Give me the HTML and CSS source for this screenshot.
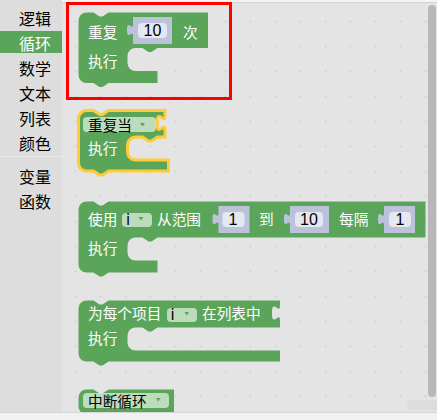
FILE: index.html
```html
<!DOCTYPE html>
<html lang="zh">
<head>
<meta charset="utf-8">
<title>Blockly 循环</title>
<link rel="stylesheet" href="styles.css">
</head>
<body>
<div class="app">
  <div class="main">
    <nav class="toolbox">
      <div class="cat">逻辑</div>
      <div class="cat sel">循环</div>
      <div class="cat">数学</div>
      <div class="cat">文本</div>
      <div class="cat">列表</div>
      <div class="cat">颜色</div>
      <div class="sep"></div>
      <div class="cat">变量</div>
      <div class="cat">函数</div>
    </nav>
    <div class="flyout">
      <div class="flyout-top"></div>
      <div class="canvas">
        <svg class="grid" width="100%" height="100%">
          <defs>
            <pattern id="gridpat" patternUnits="userSpaceOnUse" x="0" y="0" width="25" height="25">
              <rect x="12" y="18" width="3" height="1" class="gdot"/>
              <rect x="13" y="17" width="1" height="3" class="gdot"/>
            </pattern>
          </defs>
          <rect width="100%" height="100%" fill="url(#gridpat)"/>
        </svg>
        <div class="blocks">
          <!-- 重复 10 次 -->
          <svg class="blk" width="145" height="78">
            <g transform="translate(8.5,2.5)">
              <path class="body" d="M0,8 A8,8 0 0 1 8,0 H15 l6,4 3,0 6,-4 H129.5 V35.5 H79 l-6,4 -3,0 -6,-4 H57 a8,8 0 0 0 -8,8 V50.5 a8,8 0 0 0 8,8 H79 V70.5 H30 l-6,4 -3,0 -6,-4 H8 a8,8 0 0 1 -8,-8 Z"/>
              <text class="lbl" x="9.5" y="25">重复</text>
              <g transform="translate(54.5,4.5)">
                <path class="shadow" d="M0,0 V7 c0,8 -6,-6 -6,6 s6,-2 6,6 V27 H39 V0 Z"/>
                <rect class="field" x="5" y="6" width="29" height="15" rx="4"/>
                <text class="num" x="19.5" y="19">10</text>
              </g>
              <text class="lbl" x="104.5" y="25">次</text>
              <text class="lbl" x="9.5" y="54.7">执行</text>
            </g>
          </svg>
          <!-- 重复当 -->
          <svg class="blk" width="102" height="71">
            <g transform="translate(8.5,2.5)">
              <path class="body hl" d="M0,8 A8,8 0 0 1 8,0 H15 l6,4 3,0 6,-4 H86.5 V5 c0,10 -8,-8 -8,7.5 s8,-2.5 8,7.5 V26.5 H79 l-6,4 -3,0 -6,-4 H57 a8,8 0 0 0 -8,8 V41.5 a8,8 0 0 0 8,8 H90 V60.5 H30 l-6,4 -3,0 -6,-4 H8 a8,8 0 0 1 -8,-8 Z"/>
              <rect class="field" x="4.5" y="6.5" width="73" height="15" rx="4"/>
              <text class="fld" x="9.5" y="20">重复当</text>
              <polygon class="arrow" points="61.5,12.5 66.5,12.5 64,16"/>
              <text class="lbl" x="9.5" y="43.3">执行</text>
            </g>
          </svg>
          <!-- 使用 i 从范围 -->
          <svg class="blk" width="360" height="79">
            <g transform="translate(8.5,2.5)">
              <path class="body" d="M0,8 A8,8 0 0 1 8,0 H15 l6,4 3,0 6,-4 H347 V36 H79 l-6,4 -3,0 -6,-4 H57 a8,8 0 0 0 -8,8 V51 a8,8 0 0 0 8,8 H79 V71 H30 l-6,4 -3,0 -6,-4 H8 a8,8 0 0 1 -8,-8 Z"/>
              <text class="lbl" x="9.5" y="23.3">使用</text>
              <rect class="field" x="43.5" y="11.5" width="30" height="14" rx="4"/>
              <text class="var" x="49.5" y="23.5">i</text>
              <polygon class="arrow" points="60,15.5 65,15.5 62.5,19"/>
              <text class="lbl" x="78.5" y="23.3">从范围</text>
              <g transform="translate(140,4.5)">
                <path class="shadow" d="M0,0 V7 c0,8 -6,-6 -6,6 s6,-2 6,6 V27 H31 V0 Z"/>
                <rect class="field" x="4" y="6" width="22" height="15" rx="4"/>
                <text class="num" x="14.5" y="19">1</text>
              </g>
              <text class="lbl" x="180.5" y="23.3">到</text>
              <g transform="translate(211.5,4.5)">
                <path class="shadow" d="M0,0 V7 c0,8 -6,-6 -6,6 s6,-2 6,6 V27 H39 V0 Z"/>
                <rect class="field" x="5" y="6" width="28" height="15" rx="4"/>
                <text class="num" x="19" y="19">10</text>
              </g>
              <text class="lbl" x="260.5" y="23.3">每隔</text>
              <g transform="translate(305.5,4.5)">
                <path class="shadow" d="M0,0 V7 c0,8 -6,-6 -6,6 s6,-2 6,6 V27 H31 V0 Z"/>
                <rect class="field" x="5" y="6" width="22" height="15" rx="4"/>
                <text class="num" x="16" y="19">1</text>
              </g>
              <text class="lbl" x="9.5" y="52.3">执行</text>
            </g>
          </svg>
          <!-- 为每个项目 -->
          <svg class="blk" width="214" height="69">
            <g transform="translate(8.5,2.5)">
              <path class="body" d="M0,8 A8,8 0 0 1 8,0 H15 l6,4 3,0 6,-4 H201.5 V5 c0,10 -8,-8 -8,7.5 s8,-2.5 8,7.5 V27 H79 l-6,4 -3,0 -6,-4 H57 a8,8 0 0 0 -8,8 V42 a8,8 0 0 0 8,8 H201.5 V61 H30 l-6,4 -3,0 -6,-4 H8 a8,8 0 0 1 -8,-8 Z"/>
              <text class="lbl" x="9.5" y="18.3">为每个项目</text>
              <rect class="field" x="88.5" y="7.5" width="30" height="14" rx="4"/>
              <text class="var" x="94" y="19">i</text>
              <polygon class="arrow" points="106,11.5 110.5,11.5 108.25,15"/>
              <text class="lbl" x="123.5" y="18.3">在列表中</text>
              <text class="lbl" x="9.5" y="43.3">执行</text>
            </g>
          </svg>
          <!-- 中断循环 -->
          <svg class="blk" width="110" height="30">
            <g transform="translate(8.5,2.5)">
              <path class="body" d="M0,8 A8,8 0 0 1 8,0 H15 l6,4 3,0 6,-4 H95.5 V25 H8 a8,8 0 0 1 -8,-8 Z"/>
              <rect class="field" x="4.5" y="3.5" width="86" height="15" rx="4"/>
              <text class="fld" x="9.5" y="17">中断循环</text>
              <polygon class="arrow" points="77.5,8.5 82,8.5 79.75,12"/>
            </g>
          </svg>
        </div>
      </div>
      <div class="selection"></div>
      <div class="vscroll"></div>
      <div class="hscroll"></div>
    </div>
  </div>
  <div class="status"></div>
</div>
</body>
</html>
```
FILE: styles.css
```css
html, body {
  margin: 0;
  padding: 0;
}
body {
  width: 437px;
  height: 420px;
  overflow: hidden;
  font-family: "Liberation Sans", "Noto Sans CJK SC", sans-serif;
  background: #f1f1f1;
}
.app {
  display: flex;
  flex-direction: column;
  width: 437px;
  height: 420px;
}
.main {
  display: flex;
  height: 412px;
  overflow: hidden;
}
.toolbox {
  width: 62px;
  flex: none;
  background: #dddddd;
  padding-top: 6px;
  box-sizing: border-box;
}
.cat {
  height: 22px;
  line-height: 24px;
  margin-bottom: 3px;
  padding-left: 19px;
  font-family: "Noto Sans CJK SC", sans-serif;
  font-size: 16px;
  color: #000;
  white-space: nowrap;
}
.cat.sel {
  background: #5ba55b;
  color: #fff;
}
.sep {
  height: 0;
  margin: 2px 0 7px;
  border-bottom: 1px solid #e8e8e8;
}
.flyout {
  position: relative;
  flex: 1;
  display: flex;
  flex-direction: column;
  background: #e4e4e4;
}
.flyout-top {
  height: 2px;
  flex: none;
  background: #f4f4f4;
  border-bottom: 1px solid #d2d2d2;
}
.canvas {
  position: relative;
  flex: 1;
  overflow: hidden;
}
.grid {
  position: absolute;
  left: 0;
  top: 0;
}
.gdot {
  fill: #d7d7d7;
}
.blocks {
  position: relative;
  display: flex;
  flex-direction: column;
  align-items: flex-start;
  gap: 20px;
  padding: 7px 0 0 8px;
}
.blk {
  display: block;
  overflow: visible;
}
.body {
  fill: #5ba55b;
}
.body.hl {
  stroke: #fc3;
  stroke-width: 3px;
}
.shadow {
  fill: #bdc2db;
}
.field {
  fill: #fff;
  fill-opacity: 0.6;
}
.lbl {
  fill: #fff;
  font-family: "Noto Sans CJK SC", sans-serif;
  font-size: 11pt;
}
.fld {
  fill: #000;
  font-family: "Noto Sans CJK SC", sans-serif;
  font-size: 11pt;
}
.num {
  fill: #000;
  font-family: "Liberation Sans", sans-serif;
  font-size: 16px;
  text-anchor: middle;
}
.var {
  fill: #000;
  font-family: "DejaVu Sans", sans-serif;
  font-size: 15px;
  text-anchor: middle;
}
.arrow {
  fill: #5ba55b;
}
.selection {
  position: absolute;
  left: 4px;
  top: 2px;
  width: 166px;
  height: 98px;
  box-sizing: border-box;
  border: 3px solid #ff0000;
}
.vscroll {
  position: absolute;
  right: 1px;
  top: 5px;
  width: 8px;
  height: 392px;
  border-radius: 4px;
  background: #b8b8b8;
}
.hscroll {
  position: absolute;
  left: 345px;
  top: 400px;
  width: 40px;
  height: 10px;
  border-radius: 5px;
  background: #dcdcdc;
}
.status {
  height: 7px;
  flex: none;
  background: #f1f1f1;
  border-top: 1px solid #d6d6d6;
}
```
